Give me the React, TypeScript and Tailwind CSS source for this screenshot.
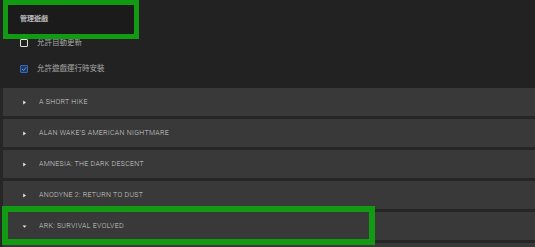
import React from 'react';

const games = [
  'A SHORT HIKE',
  "ALAN WAKE'S AMERICAN NIGHTMARE",
  'AMNESIA:  THE DARK DESCENT',
  'ANODYNE 2: RETURN TO DUST',
  'ARK: SURVIVAL EVOLVED',
];

const Caret = ({ open }: { open?: boolean }) => (
  <svg width="5" height="5" viewBox="0 0 5 5" className="shrink-0">
    {open ? <path d="M0.5 1.5 L4.5 1.5 L2.5 3.8 Z" fill="#e5e5e5" /> : <path d="M1.2 0.5 L4 2.5 L1.2 4.5 Z" fill="#e5e5e5" />}
  </svg>
);

const App = () => {
  return (
    <div
      className="relative w-[535px] h-[247px] overflow-hidden bg-[#222222]"
      style={{ fontFamily: 'Roboto, "Noto Sans CJK TC", sans-serif' }}
    >
      <div className="h-[88px] flex flex-col pl-[20px]">
        <div className="h-[38px] flex items-center text-[7px] font-bold text-[#e8e8e8] pt-[1px]">管理遊戲</div>
        <div className="h-[10px] flex items-center gap-[9px]">
          <div className="w-[8px] h-[8px] border border-[#e0e0e0] rounded-[1px]" />
          <span className="text-[7.5px] text-[#a8a8a8]">允許自動更新</span>
        </div>
        <div className="h-[10px] flex items-center gap-[9px] mt-[16px]">
          <div className="w-[8px] h-[8px] bg-[#1e3a66] border border-[#3569b4] rounded-[1px] flex items-center justify-center">
            <svg width="6" height="6" viewBox="0 0 6 6">
              <path d="M1 3 L2.5 4.5 L5 1.5" stroke="#7fa6e0" strokeWidth="0.8" fill="none" />
            </svg>
          </div>
          <span className="text-[7.5px] text-[#a8a8a8]">允許遊戲運行時安裝</span>
        </div>
      </div>

      <div className="flex flex-col gap-[3px] bg-[#262626] pl-[3px]">
        {games.map((g, i) => (
          <div key={g} className="h-[28px] bg-[#393939] flex items-center pl-[19px] gap-[12px]">
            <Caret open={i === 4} />
            <span className="text-[7px] font-light text-[#cfcfcf] tracking-[0.3px]">{g}</span>
          </div>
        ))}
        <div className="h-[28px] bg-[#393939]" />
      </div>

      {/* highlight boxes */}
      <div className="absolute left-[3px] top-0 w-[136px] h-[39px] border-[5px] border-[#139a13] bg-black/20" />
      <div className="absolute left-[2px] top-[206px] w-[373px] h-[39px] border-[6px] border-[#139a13]" />
    </div>
  );
};

export default App;
